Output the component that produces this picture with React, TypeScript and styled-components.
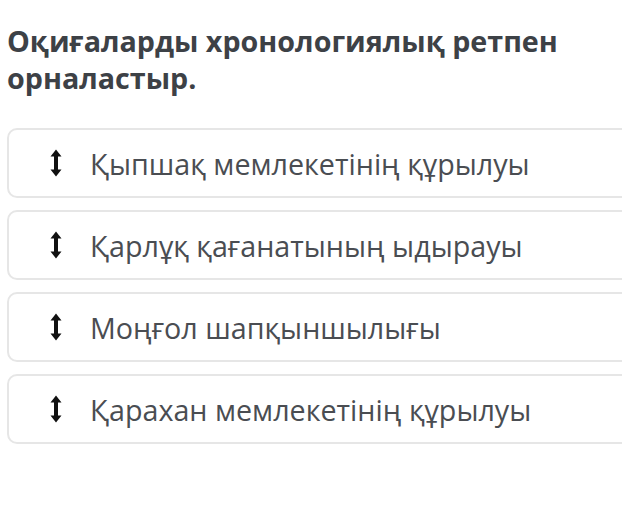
import React from "react";
import styled, { createGlobalStyle } from "styled-components";

const Global = createGlobalStyle`
  html, body { margin: 0; padding: 0; background: #ffffff; }
  body { font-family: "Open Sans", "Noto Sans", sans-serif; }
`;

const Page = styled.div`
  width: 622px;
  height: 510px;
  overflow: hidden;
  padding: 22px 0 0 7px;
  box-sizing: border-box;
`;

const Title = styled.h1`
  margin: 0 0 32px 0;
  font-family: "Open Sans", sans-serif;
  font-weight: 700;
  font-size: 28.7px;
  line-height: 37px;
  color: #3d4146;
  max-width: 600px;
`;

const List = styled.div`
  display: flex;
  flex-direction: column;
  gap: 12px;
  width: 640px;
`;

const Card = styled.div`
  height: 70px;
  box-sizing: border-box;
  border: 2px solid #e6e6e6;
  border-radius: 10px;
  display: flex;
  align-items: center;
  padding-left: 41px;
  background: #fff;
`;

const Handle = styled.svg`
  width: 12px;
  height: 28px;
  flex: none;
  margin-right: 28px;
`;

const Label = styled.span`
  font-family: "Open Sans", sans-serif;
  font-size: 28.7px;
  color: #4a4d52;
  white-space: nowrap;
`;

const items = [
  "Қыпшақ мемлекетінің құрылуы",
  "Қарлұқ қағанатының ыдырауы",
  "Моңғол шапқыншылығы",
  "Қарахан мемлекетінің құрылуы",
];

const UpDown = () => (
  <Handle viewBox="0 0 12 28">
    <path d="M6 0.5 L11.5 7.5 H8 V20.5 H11.5 L6 27.5 L0.5 20.5 H4 V7.5 H0.5 Z" fill="#111" />
  </Handle>
);

export default function App() {
  return (
    <>
      <Global />
      <Page>
        <Title>Оқиғаларды хронологиялық ретпен орналастыр.</Title>
        <List>
          {items.map((t) => (
            <Card key={t}>
              <UpDown />
              <Label>{t}</Label>
            </Card>
          ))}
        </List>
      </Page>
    </>
  );
}
